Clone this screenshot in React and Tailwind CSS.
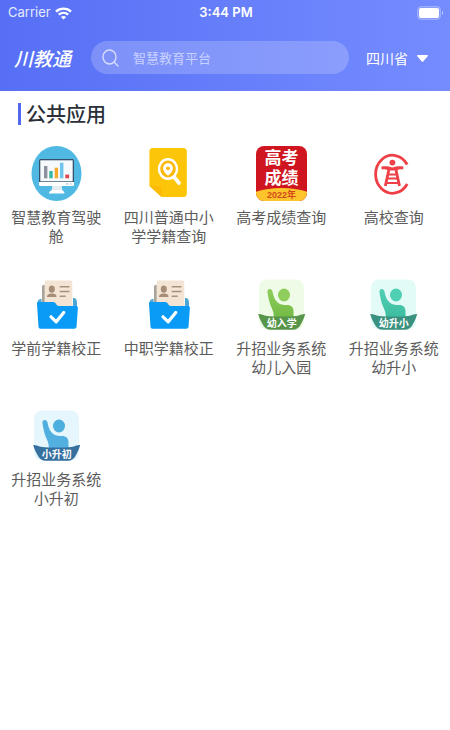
import React, { useState } from 'react';

const WifiIcon = () => (
  <svg width="17" height="13" viewBox="0 0 17 13" fill="none" stroke="white" strokeWidth="2.4">
    <path d="M1 4.6C5.2 0.6 11.8 0.6 16 4.6" />
    <path d="M3.8 7.7C6.5 5.2 10.5 5.2 13.2 7.7" />
    <path d="M8.5 12.6L5.9 9.9C7.4 8.6 9.6 8.6 11.1 9.9Z" fill="white" stroke="none" />
  </svg>
);

const BatteryIcon = () => (
  <svg width="27" height="14" viewBox="0 0 27 14">
    <rect x="0.5" y="0.5" width="23" height="13" rx="3.5" fill="white" fillOpacity="0.15" stroke="white" strokeOpacity="0.25" />
    <rect x="2" y="2" width="20" height="10" rx="2" fill="white" />
    <path d="M25 5C26.6 5.6 26.6 8.4 25 9Z" fill="white" fillOpacity="0.5" />
  </svg>
);

const DashboardIcon = () => (
  <svg width="51" height="55" viewBox="0 0 51 55">
    <ellipse cx="25.5" cy="27.5" rx="25" ry="27.5" fill="#4fb9e3" />
    <path d="M21.5 39h9l1 6h-11z" fill="#e6edf2" />
    <path d="M18 47.500c0-2 2-3.500 4-3.500h7.500c2 0 4 1.500 4 3.500z" fill="#fff" />
    <rect x="8" y="13" width="35" height="27" rx="1.500" fill="#fff" />
    <path d="M8 36V14.500C8 13.600 8.600 13 9.500 13h32c.9 0 1.500.6 1.500 1.500V36z" fill="#34506b" />
    <rect x="9.300" y="14.300" width="32.400" height="21" fill="#f6fafc" />
    <rect x="13" y="20" width="3.400" height="12.300" fill="#8b929b" />
    <rect x="18.300" y="25" width="3.400" height="7.300" fill="#35b8a5" />
    <rect x="23.700" y="21.700" width="3.400" height="10.600" fill="#f6a92c" />
    <rect x="29" y="16.700" width="3.400" height="15.600" fill="#6cc5ec" />
    <rect x="34.300" y="28.600" width="3.800" height="3.700" fill="#e0454c" />
    <path d="M35 38h2.500M39 38h1.500" stroke="#9fb0bc" />
  </svg>
);

const SearchDocIcon = () => (
  <svg width="51" height="55" viewBox="0 0 51 55">
    <path d="M9.500 2h31c2 0 3.300 1.300 3.300 3.300v42.400c0 2-1.300 3.300-3.300 3.300H18.500L6.400 40V5.300C6.400 3.300 7.500 2 9.500 2z" fill="#fdc508" />
    <path d="M6.400 39.500L18.700 51v-7.500c0-2-1-3-3-3z" fill="#fdb904" />
    <path d="M31.500 31.500l4.500 5.500" stroke="#fff" strokeWidth="3.600" strokeLinecap="round" />
    <ellipse cx="25" cy="23" rx="9" ry="9.800" fill="#fcb90a" stroke="#fff" strokeWidth="2.400" />
    <path d="M25 17.300c-3 0-4.900 2.200-4.900 4.900 0 3.300 3 5.500 4.900 7.600 1.900-2.100 4.900-4.300 4.900-7.600 0-2.700-1.900-4.900-4.900-4.900z" fill="#fff" />
    <circle cx="25" cy="22.300" r="1.900" fill="#fcb90a" />
  </svg>
);

const ScoreIcon = () => (
  <svg width="51" height="55" viewBox="0 0 51 55" fontFamily="'Liberation Sans', 'Noto Sans CJK SC', sans-serif" fontWeight="bold" textAnchor="middle">
    <clipPath id="score-clip">
      <rect width="51" height="55" rx="8" />
    </clipPath>
    <g clipPath="url(#score-clip)">
      <rect width="51" height="55" fill="#cf1620" />
      <ellipse cx="25.500" cy="54" rx="35" ry="12" fill="#fdc52b" />
    </g>
    <text x="25.500" y="18" fontSize="17" fill="#fff">高考</text>
    <text x="25.500" y="38" fontSize="17" fill="#fff">成绩</text>
    <text x="25.500" y="52" fontSize="9" fill="#d4491a">2022年</text>
  </svg>
);

const CollegeIcon = () => (
  <svg width="51" height="55" viewBox="0 0 51 55" fill="none" stroke="#ee4046">
    <path d="M39.200 18.500A17 19 0 1 0 39.200 38" strokeWidth="2.800" />
    <circle cx="24.400" cy="16.600" r="2.900" fill="#ee4046" stroke="none" />
    <path d="M13.500 20.400c4-.6 7.500-.2 10.900 1.200 3.400-1.400 6.900-1.800 10.900-1.200v2.800c-3-.2-5 .2-7.300 1.300h-7.200c-2.300-1.100-4.300-1.500-7.300-1.300z" fill="#ee4046" stroke="none" />
    <path d="M20.800 24L17.300 40M28 24l3.500 16" strokeWidth="2.800" />
    <path d="M20 28.500h9M19.500 32.500h10M18.500 37h12" strokeWidth="2" />
  </svg>
);

const FolderIcon = () => (
  <svg width="51" height="55" viewBox="0 0 51 55">
    <path d="M11 9.500c0-1 .6-1.600 1.600-1.600H15V30h-4z" fill="#a9a49b" />
    <path d="M6.500 27c0-3.500 1-5 4-5V30zM42 21c3 0 4 1.500 4 5v5h-4z" fill="#4ba6d8" />
    <path d="M15.600 3.500h23.700c1.200 0 2 .8 2 2V32H13.600V5.500c0-1.200.8-2 2-2z" fill="#f3e4d4" />
    <ellipse cx="20.800" cy="12.200" rx="3" ry="3.600" fill="#a58d77" />
    <path d="M16 20c0-2.600 2-3.500 4.800-3.500s4.800.9 4.800 3.500z" fill="#a58d77" />
    <path d="M28.700 9.800h9.800M28.700 14.500h9.800M28.700 19.300h6" stroke="#a9917c" strokeWidth="1.400" />
    <path d="M7 25h15.500c2.400 0 2.600 4 5.500 4h17c1.300 0 2 .8 1.900 2L45.500 49.700c-.1 1.300-.9 2-2.200 2H9.700c-1.300 0-2.100-.7-2.200-2L6 27c-.1-1.200 0-2 1-2z" fill="#0a9bf7" />
    <path d="M20 39.800l5.200 5L32.800 35.500" fill="none" stroke="#fff" strokeWidth="3.200" strokeLinecap="round" strokeLinejoin="round" />
  </svg>
);

const StudentIcon = ({ id, text, bg, light, dark, banner }) => (
  <svg width="51" height="55" viewBox="0 0 51 55">
    <linearGradient id={id} x1="0" y1="0" x2="0" y2="1">
      <stop offset="0" stopColor={light} />
      <stop offset="1" stopColor={dark} />
    </linearGradient>
    <rect x="3" y="2.500" width="45" height="50" rx="8" fill={bg} />
    <ellipse cx="28" cy="18" rx="6" ry="6.500" fill={light} />
    <path d="M11.500 15.500c-.4-2.200.7-3.400 2.200-3.500 1.500-.1 2.400.9 2.800 2.600 1 4.500 2.200 9.400 6.500 11.900 2.200 1.300 5 1.500 8.300 1.500 3.800 0 6.200 2.200 6.200 6v8H17.500c1-4-.3-8-2-11.500-2-4-3.200-10-4-15z" fill={`url(#${id})`} />
    <path d="M2.200 37c3.300-.2 5 1.500 9 2 6.500.8 22.500.8 29 0 4-.5 5.700-2.200 9-2-1 4-2.700 7-4.200 10-1.700 3.600-4.500 5.800-8.500 5.800H15c-4 0-6.800-2.200-8.500-5.800-1.600-3-3.300-6-4.300-10z" fill={banner} />
    <text x="25.700" y="49.500" fontSize="10" fontWeight="bold" textAnchor="middle" fill="#fff" fontFamily="'Noto Sans CJK SC', sans-serif">
      {text}
    </text>
  </svg>
);

const apps = [
  { name: '智慧教育驾驶舱', icon: <DashboardIcon /> },
  { name: '四川普通中小学学籍查询', icon: <SearchDocIcon /> },
  { name: '高考成绩查询', icon: <ScoreIcon /> },
  { name: '高校查询', icon: <CollegeIcon /> },
  { name: '学前学籍校正', icon: <FolderIcon /> },
  { name: '中职学籍校正', icon: <FolderIcon /> },
  {
    name: '升招业务系统幼儿入园',
    icon: <StudentIcon id="kindergarten" text="幼入学" bg="#eefbe6" light="#8fce5c" dark="#72b944" banner="#57964a" />,
  },
  {
    name: '升招业务系统幼升小',
    icon: <StudentIcon id="primary" text="幼升小" bg="#e3fbf7" light="#4fcfb4" dark="#3dbc9f" banner="#3a917f" />,
  },
  {
    name: '升招业务系统小升初',
    icon: <StudentIcon id="junior" text="小升初" bg="#e6f6fd" light="#4dafdd" dark="#54b0e2" banner="#35709f" />,
  },
];

const Header = () => {
  const [keyword, setKeyword] = useState('');

  return (
    <header className="bg-linear-to-r from-[#566ff5] to-[#758cff] pb-[17px] text-white">
      {/* Status bar */}
      <div className="grid grid-cols-3 items-center h-[26px] pl-2 pr-1.5 font-[Inter,sans-serif] text-[13px]">
        <div className="flex items-center gap-1 text-white/85">
          <span>Carrier</span>
          <WifiIcon />
        </div>
        <span className="text-center font-semibold">3:44 PM</span>
        <div className="flex justify-end">
          <BatteryIcon />
        </div>
      </div>

      {/* Logo, search and region */}
      <div className="flex items-center pt-[15px] pl-3.5 pr-[22px]">
        <h1 className="shrink-0 w-[77px] text-[19px] leading-8 font-medium italic">川教通</h1>
        <label className="flex flex-1 min-w-0 items-center gap-[14px] h-[33px] rounded-full bg-white/20 pl-[11px] pr-3">
          <svg width="17" height="18" viewBox="0 0 17 18" className="shrink-0" fill="none" stroke="#d6dcff" strokeWidth="1.4" strokeLinecap="round">
            <ellipse cx="7.500" cy="8" rx="6.500" ry="7" />
            <path d="M12.300 13.200L16 17" />
          </svg>
          <input
            type="text"
            aria-label="智慧教育平台"
            placeholder="智慧教育平台"
            value={keyword}
            onChange={(e) => setKeyword(e.target.value)}
            className="flex-1 min-w-0 bg-transparent text-[13px] text-white placeholder:text-[#c9d1ff] outline-none"
          />
        </label>
        <div className="relative ml-[17px] shrink-0">
          <select aria-label="四川省" className="appearance-none bg-transparent pr-5 text-[14px] leading-8 outline-none">
            <option>四川省</option>
          </select>
          <svg width="11" height="7" viewBox="0 0 11 7" className="absolute right-0 top-[13px] pointer-events-none" fill="white">
            <path d="M.8 0h9.400c.7 0 1 .7.5 1.200L6.200 6.500c-.4.500-1 .5-1.400 0L.3 1.200C-.2.7.1 0 .8 0z" />
          </svg>
        </div>
      </div>
    </header>
  );
};

const App = () => {
  return (
    <div className="min-h-screen bg-white font-['Noto_Sans_CJK_SC',sans-serif]">
      <Header />
      <main>
        <div className="flex items-center gap-[5px] pt-2 pl-[18px]">
          <span className="w-[3px] h-[22px] bg-[#5268ee]" />
          <h2 className="text-[20px] leading-[30px] font-medium text-[#2b2f38]">公共应用</h2>
        </div>
        <div className="grid grid-cols-4 gap-y-[31px] pt-[17px]">
          {apps.map((app) => (
            <a key={app.name} href="#" className="flex flex-col items-center gap-1.5 px-2.5">
              {app.icon}
              <span className="max-w-[92px] pb-px text-center text-[15px] leading-[19px] text-[#5c5c5c]">{app.name}</span>
            </a>
          ))}
        </div>
      </main>
    </div>
  );
};

export default App;
